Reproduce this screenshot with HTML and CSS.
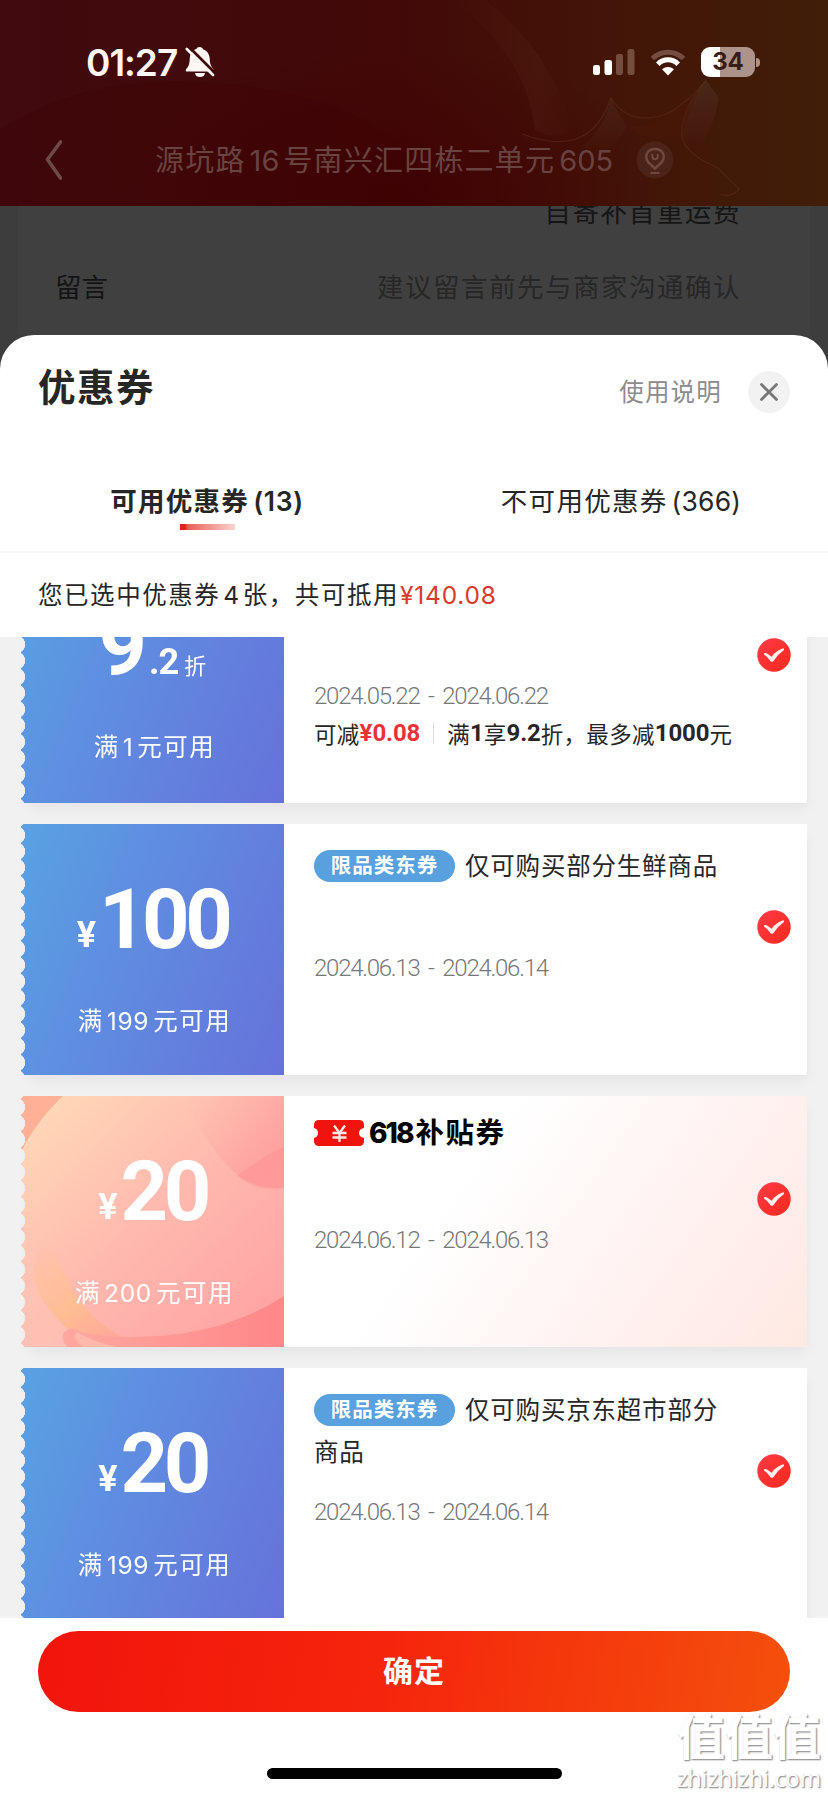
FILE: index.html
```html
<!DOCTYPE html>
<html lang="zh-CN">
<head>
<meta charset="utf-8">
<title>优惠券</title>
<link rel="stylesheet" href="styles.css">
</head>
<body>
<svg class="defs" width="0" height="0">
  <defs>
    <linearGradient id="redFill" x1="0" y1="0" x2="1" y2="1"><stop offset="0" stop-color="#ff3b45"/><stop offset="1" stop-color="#f9281c"/></linearGradient>
    <symbol id="check" viewBox="0 0 34 34"><circle cx="17" cy="17" r="16.7" fill="url(#redFill)"/><path d="M7 15.300Q8.500 14.500 10 15.400L14.600 18.700Q18.500 13 26 10.300Q27.500 10.500 27 12Q20.500 16.500 16.500 23Q15 24.700 13.300 23Q10.500 18.500 7 16.500z" fill="#fff0ee"/></symbol>
  </defs>
</svg>
<div class="screen">
  <header class="top">
    <svg class="top-art" viewBox="0 0 828 206">
      <defs>
        <linearGradient id="fold" x1="0" y1="0" x2="0" y2="1"><stop offset="0" stop-color="#4a2818"/><stop offset="1" stop-color="#441408"/></linearGradient>
        <linearGradient id="beam" x1="0" y1="0" x2="1" y2="0"><stop offset="0" stop-color="#5a2518" stop-opacity="0"/><stop offset=".7" stop-color="#5a2518" stop-opacity=".25"/><stop offset="1" stop-color="#5a2518" stop-opacity="0"/></linearGradient>
      </defs>
      <path d="M0 130Q90 70 230 84T420 170L440 206H0z" fill="#400405" opacity=".35"/>
      <path d="M485 0Q550 50 575 132Q552 140 535 130Q525 50 450 0z" fill="url(#beam)"/>
      <path d="M611 98Q618 115 627 126L613 148H580Q604 130 611 98z" fill="url(#fold)" opacity=".7"/>
      <path d="M706 80L719 98Q714 128 696 154Q684 146 680 134Q682 104 706 80z" fill="url(#fold)"/>
      <path d="M522 134Q590 160 611 98Q629 126 664 115Q685 106 706 80Q674 122 684 143Q692 157 718 168L739 189Q732 198 720 194" fill="none" stroke="#5c2a1b" stroke-width="1.300" opacity=".6"/>
      <path d="M626 126Q665 130 700 86L681 134Q655 148 626 126z" fill="#4a1508" opacity=".5"/>
    </svg>
    <div class="status">
      <span class="clock">01:27</span>
      <svg class="bell" width="30" height="34" viewBox="0 0 30 34"><path d="M14.500 2C16.700 2 17.500 3 18 4.200C23 6 24.600 10 24.800 14.500C25 19.500 26 21 28.500 24.500V26.500H1.500C0 26 1 24 2.500 22.500C4.500 20 4.500 17 4.800 13C5.200 8 7.500 5 11.300 4C12 2.700 12.800 2 14.500 2z" fill="#fff7f4"/><path d="M10 28H20C19.500 31 17.500 32 15 32S10.500 31 10 28z" fill="#fff7f4"/><path d="M4.500 2.500L31 29" stroke="#420808" stroke-width="2.800"/><path d="M1.800 4L28 30" stroke="#fff7f4" stroke-width="2.600" stroke-linecap="round"/></svg>
      <svg class="signal" width="42" height="28" viewBox="0 0 42 28"><rect y="17" width="7" height="10" rx="2.300" fill="#fff"/><rect x="11.500" y="12" width="7.500" height="15" rx="2.300" fill="#fff"/><rect x="23" y="6" width="7" height="21" rx="2.300" fill="#754c40"/><rect x="34.500" y="1" width="7" height="26" rx="2.300" fill="#754c40"/></svg>
      <svg class="wifi" width="36" height="27" viewBox="0 0 36 27"><path d="M2.500 9.500C11 1 25 1 33.500 9.500" fill="none" stroke="#754c40" stroke-width="5"/><path d="M7.800 15.200C13.500 9.400 22.500 9.400 28.200 15.200" fill="none" stroke="#fff" stroke-width="5"/><path d="M12 20.300Q18 15.500 24 20.300L18 26.500z" fill="#fff"/></svg>
      <div class="battery">34</div><i class="battery-cap"></i>
    </div>
    <div class="nav">
      <svg class="back" width="18" height="40" viewBox="0 0 18 40"><path d="M15.500 2L2.500 19.500L15.500 38" fill="none" stroke="#6c4a47" stroke-width="3.600" stroke-linecap="round" stroke-linejoin="round"/></svg>
      <span class="address">源坑路<b class="num">16</b>号南兴汇四栋二单元<b class="num last">605</b></span>
      <svg class="pin" width="38" height="38" viewBox="0 0 38 38"><circle cx="19" cy="19" r="18.500" fill="#4b2318"/><path d="M19 27.500L12.500 21.500C7.500 15 11.500 8 19 8S30.500 15 25.500 21.500z" fill="none" stroke="#71483c" stroke-width="2.500" stroke-linejoin="round"/><path d="M16.300 13v2.500a2.700 2.700 0 0 0 5.400 0V13M14.500 32h9" fill="none" stroke="#71483c" stroke-width="2"/></svg>
    </div>
  </header>
  <section class="order">
    <div class="ship">自寄补首重运费</div>
    <div class="message"><span>留言</span><span class="hint">建议留言前先与商家沟通确认</span></div>
  </section>
  <main class="sheet">
    <div class="sheet-head">
      <h1>优惠券</h1>
      <span class="help">使用说明</span>
      <svg class="close" width="42" height="42" viewBox="0 0 42 42"><circle cx="21" cy="21" r="21" fill="#f2f2f2"/><path d="M13.500 13.500L28.500 28.500M28.500 13.500L13.500 28.500" stroke="#777" stroke-width="2.800" stroke-linecap="round"/></svg>
    </div>
    <div class="tabs">
      <div class="tab active">可用优惠券<span class="paren">(13)</span></div>
      <div class="tab">不可用优惠券<span class="paren">(366)</span></div>
    </div>
    <div class="summary">您已选中优惠券<span class="count">4</span>张，共可抵用<span class="sum">¥140.08</span></div>
    <div class="list">
      <article class="coupon first">
        <div class="stub"><div class="price discount"><span class="big">9</span><span class="dec">.2</span><span class="unit">折</span></div><div class="cond">满<b class="num one">1</b>元可用</div></div>
        <div class="info"><div class="title"></div><div class="date">2024.05.22 - 2024.06.22</div><div class="detail">可减<b class="off">¥0.08</b><i class="bar"></i>满<b>1</b>享<b>9.2</b>折，最多减<b>1000</b>元</div></div>
        <svg class="check"><use href="#check"/></svg>
      </article>
      <article class="coupon">
        <div class="stub"><div class="price"><span class="yen">¥</span><span class="big">100</span></div><div class="cond">满<b class="num">199</b>元可用</div></div>
        <div class="info"><div class="title"><span class="tag">限品类东券</span>仅可购买部分生鲜商品</div><div class="date">2024.06.13 - 2024.06.14</div></div>
        <svg class="check"><use href="#check"/></svg>
      </article>
      <article class="coupon promo">
        <div class="stub">
          <svg class="petals" viewBox="0 0 263 251" preserveAspectRatio="none">
            <defs>
              <linearGradient id="peach" x1="0" y1="0" x2="1" y2="1"><stop offset="0" stop-color="#ffdcb9"/><stop offset=".5" stop-color="#ffb8ae"/><stop offset="1" stop-color="#ffa0a2"/></linearGradient>
              <linearGradient id="rose" x1="0" y1="0" x2="1" y2=".6"><stop offset="0" stop-color="#ffcbb8"/><stop offset="1" stop-color="#ff8c90"/></linearGradient>
              <linearGradient id="tip" x1="0" y1="0" x2="1" y2="1"><stop offset="0" stop-color="#ff8a8c"/><stop offset="1" stop-color="#ff9093" stop-opacity=".4"/></linearGradient>
              <linearGradient id="leaf" x1="0" y1="0" x2=".8" y2="1"><stop offset="0" stop-color="#ffc2b0"/><stop offset=".6" stop-color="#ffbd94"/><stop offset="1" stop-color="#ffa898"/></linearGradient>
              <linearGradient id="base" x1="0" y1="0" x2="1" y2="0"><stop offset="0" stop-color="#ffa8a0"/><stop offset="1" stop-color="#ff8789"/></linearGradient>
            </defs>
            <rect width="263" height="251" fill="url(#peach)"/>
            <path d="M0 0H42Q23 17 5 46L0 58z" fill="#ffb096"/>
            <path d="M157 0Q170 18 192 52Q222 96 263 92V0z" fill="url(#rose)" opacity=".5"/>
            <path d="M216 80Q240 61 263 51V92Q240 98 216 80z" fill="url(#tip)" opacity=".6"/>
            <path d="M0 90Q4 190 62 251H0z" fill="#ffc4b7" opacity=".6"/>
            <path d="M25 151Q10 157 12 182Q22 216 62 246L104 242Q66 226 45 180Q34 154 25 151z" fill="url(#leaf)"/>
            <path d="M60 236Q84 242 112 241Q200 241 263 200V251H46Q36 238 48 233Q54 232 60 236z" fill="url(#base)"/>
            <path d="M56 236Q72 246 96 251H62Q50 242 56 236z" fill="#ffb8ac"/>
          </svg>
          <div class="price"><span class="yen">¥</span><span class="big">20</span></div><div class="cond">满<b class="num">200</b>元可用</div></div>
        <div class="info"><div class="title subsidy"><svg class="ticket" width="50" height="26" viewBox="0 0 50 26"><path d="M5 0H45Q50 0 50 5V8Q45 9 45 13T50 18V21Q50 26 45 26H5Q0 26 0 21V18Q4 17 4 13T0 8V5Q0 0 5 0z" fill="#f1140d"/><path d="M20 5.500L25.500 13L31 5.500M18.500 13H32.500M18.500 17.500H32.500M25.500 13V22" fill="none" stroke="#ffe9e4" stroke-width="2.300"/></svg><b class="n618">618</b><b class="sub">补贴券</b></div><div class="date">2024.06.12 - 2024.06.13</div></div>
        <svg class="check"><use href="#check"/></svg>
      </article>
      <article class="coupon">
        <div class="stub"><div class="price"><span class="yen">¥</span><span class="big">20</span></div><div class="cond">满<b class="num">199</b>元可用</div></div>
        <div class="info"><div class="title"><span class="tag">限品类东券</span>仅可购买京东超市部分<br>商品</div><div class="date">2024.06.13 - 2024.06.14</div></div>
        <svg class="check"><use href="#check"/></svg>
      </article>
    </div>
    <footer class="foot">
      <div class="confirm">确定</div>
      <div class="home"></div>
    </footer>
  </main>
  <div class="mark"><div class="mark-cn">值值值</div><div class="mark-url">zhizhizhi.com</div></div>
</div>
</body>
</html>
```
FILE: styles.css
```css
* { box-sizing: border-box; }
body { margin: 0; font-family: Inter, "Noto Sans CJK SC", sans-serif; color: #262626; }
.defs { position: absolute; }
.screen { position: relative; width: 828px; height: 1796px; overflow: hidden; background: #3d3d3d; display: flex; flex-direction: column; white-space: nowrap; }
.top { position: relative; flex: none; height: 206px; background: radial-gradient(ellipse 280px 150px at 390px 195px, #400203 0%, rgba(64,2,3,0) 100%), linear-gradient(90deg, #400a0e 0%, #420908 48%, #431407 72%, #401e08 100%); overflow: hidden; }
.top-art { position: absolute; inset: 0; width: 828px; height: 206px; }
.status { position: relative; display: flex; align-items: center; height: 124px; padding: 0 68px 0 86px; }
.clock { width: 99px; font-size: 37px; font-weight: 600; letter-spacing: -1px; color: #fff7f4; }
.bell { margin-right: auto; }
.signal { margin-right: 15px; }
.wifi { margin-right: 15px; }
.battery { width: 54px; height: 30px; border-radius: 9px; background: linear-gradient(90deg, #fff 19px, #ad948a 19px); color: #3d1c10; font-size: 24px; font-weight: 700; line-height: 30px; text-align: center; }
.battery-cap { width: 4px; height: 9px; margin-left: 1px; border-radius: 0 4px 4px 0; background: #ad948a; }
.nav { position: relative; display: flex; align-items: center; height: 72px; padding-left: 45px; }
.back { margin-right: 92px; }
.address { width: 481px; margin-top: -4px; font-size: 29px; letter-spacing: 1.200px; color: #684340; }
.num { margin: 0 4px; font-weight: 400; letter-spacing: 0; }
.num.last { margin-right: 0; }
.order { flex: none; height: 129px; margin: 0 18px; padding: 0 69px 0 37px; background: #404040; overflow: hidden; color: #1c1c1c; font-size: 26.5px; }
.ship { height: 40px; margin-top: -14px; line-height: 40px; letter-spacing: 1.600px; text-align: right; color: #151515; }
.message { display: flex; justify-content: space-between; margin-top: 35px; line-height: 40px; color: #141414; }
.hint { letter-spacing: 1.500px; color: #272727; }
.sheet { flex: none; height: 1461px; border-radius: 34px 34px 0 0; background: #fff; display: flex; flex-direction: column; }
.sheet-head { display: flex; align-items: center; height: 114px; padding: 0 38px; }
h1 { margin: -8px auto 0 0; font-size: 37.500px; font-weight: 600; letter-spacing: 1.500px; line-height: 50px; }
.help { margin: -3px 26px 0 0; font-size: 24.500px; letter-spacing: 1.200px; color: #8c8c8c; }
.tabs { display: flex; height: 104px; border-bottom: 2px solid #f7f7f7; }
.tab { position: relative; width: 414px; padding-top: 32px; line-height: 40px; font-size: 26.500px; letter-spacing: 1.300px; text-align: center; }
.tab.active { font-weight: 600; }
.tab.active::after { content: ""; position: absolute; left: 180px; top: 78px; width: 55px; height: 6px; margin-top: -3px; background: linear-gradient(90deg, #d9261f 0 5px, #e96058 8px, #fbd3cf); }
.paren { margin-left: 4px; letter-spacing: .2px; }
.tab.active .paren { letter-spacing: .7px; }
.summary { height: 84px; padding-left: 38px; line-height: 84px; font-size: 24.500px; letter-spacing: 1.550px; }
.count { margin: 0 2px 0 3px; }
.sum { margin-left: 1px; letter-spacing: .8px; color: #d83a30; }
.list { height: 981px; overflow: hidden; padding: 0 21px; background: #f1f1f1; }
.coupon { position: relative; display: flex; width: 786px; height: 251px; margin-bottom: 21px; }
.coupon::before { content: ""; position: absolute; inset: 6px 0 0 8px; box-shadow: 0 6px 12px rgba(0,0,0,.05); }
.first { margin-top: -85px; }
.stub { position: relative; width: 263px; padding-top: 50px; text-align: center; color: #fff; background: linear-gradient(112deg, #58a2e2 0%, #6089e0 48%, #6672da 100%); -webkit-mask: radial-gradient(circle 9.600px at -5.300px 8.100px, transparent 96%, #000 100%) 0 3px / 100% 16.250px repeat-y; mask: radial-gradient(circle 9.600px at -5.300px 8.100px, transparent 96%, #000 100%) 0 3px / 100% 16.250px repeat-y; }
.petals { position: absolute; inset: 0; width: 263px; height: 251px; }
.price { position: relative; display: flex; justify-content: center; align-items: baseline; height: 100px; font-family: Roboto, sans-serif; font-weight: 700; line-height: 92px; }
.yen { position: relative; top: -1px; margin-right: 3px; font-size: 36px; }
.big { font-size: 83px; letter-spacing: -4.500px; }
.discount { margin: -2px 0 2px; }
.discount .big { font-size: 84px; letter-spacing: -2px; }
.dec { font-size: 36px; margin-left: 4px; letter-spacing: -1px; }
.unit { font-family: "Noto Sans CJK SC", sans-serif; font-size: 22px; font-weight: 400; margin-left: 6px; }
.cond { position: relative; height: 40px; margin-top: 27px; padding-left: 4px; line-height: 40px; font-size: 24.500px; letter-spacing: 1.500px; }
.cond .num { margin: 0 4px 0 3px; letter-spacing: .7px; }
.info { position: relative; width: 523px; padding: 21px 0 0 30px; background: #fff; }
.promo .info { background: linear-gradient(125deg, #fff 34%, #ffeeec 80%, #ffe9e2); }
.title { height: 84px; line-height: 42px; font-size: 24.500px; letter-spacing: .8px; color: #262626; }
.tag { display: inline-block; width: 141px; height: 32px; margin-right: 10px; border-radius: 16px; background: #58a0de; color: #fff; font-size: 20.500px; font-weight: 600; line-height: 31px; text-align: center; letter-spacing: 1px; vertical-align: 2px; }
.date { margin-top: 20px; height: 38px; line-height: 38px; font-family: Roboto, sans-serif; font-size: 24px; font-weight: 300; letter-spacing: -1.250px; word-spacing: 4px; color: #777; }
.detail { display: flex; align-items: center; height: 36px; font-size: 22.500px; letter-spacing: .3px; }
.detail b { font-family: Roboto, sans-serif; font-size: 24px; letter-spacing: -.1px; }
.detail .off { color: #e8323a; }
.bar { width: 1px; height: 22px; margin: 0 13px; background: #ddd; }
.check { position: absolute; left: 736px; top: 86px; width: 34px; height: 34px; }
.subsidy { display: flex; align-items: flex-start; padding-top: 3px; color: #000; line-height: 26px; font-size: 28px; letter-spacing: 0; }
.ticket { margin-right: 5px; }
.n618 { font-weight: 800; letter-spacing: -2px; margin-right: 3px; }
.sub { font-size: 28.500px; letter-spacing: 1.500px; }
.foot { height: 178px; padding: 13px 38px 0; }
.confirm { height: 81px; border-radius: 41px; background: linear-gradient(100deg, #f2140c, #f5240c 45%, #f4500c); color: #fff; font-size: 30px; font-weight: 600; line-height: 81px; text-align: center; letter-spacing: 1px; }
.home { width: 295px; height: 11px; margin: 56px 0 0 229px; border-radius: 6px; background: #000; }
.mark { position: absolute; right: 7px; bottom: 4px; width: 146px; text-align: right; color: #fff; text-shadow: 1px 1px 1px #999, 1px 1px 2px #aaa; }
.mark-cn { font-size: 48px; line-height: 54px; font-weight: 700; }
.mark-url { font-family: "Open Sans", sans-serif; font-size: 23px; line-height: 27px; }
```
